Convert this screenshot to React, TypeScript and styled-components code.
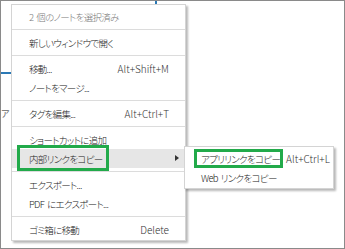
import styled, { createGlobalStyle } from "styled-components";

const Global = createGlobalStyle`
  html, body {
    margin: 0;
    padding: 0;
    background: #fff;
  }
  body {
    font-family: "Noto Sans CJK JP", "Noto Sans", sans-serif;
    font-feature-settings: "palt";
  }
`;

const Frame = styled.div`
  position: relative;
  width: 345px;
  height: 249px;
  box-sizing: border-box;
  border: 1px solid #8a8a8a;
  background: #fff;
  overflow: hidden;
`;

const BlueLine = styled.div<{ $vertical?: boolean }>`
  position: absolute;
  background: #2b79b5;
  ${(p) =>
    p.$vertical
      ? "left: 154px; top: 0; width: 2px; height: 8px;"
      : "left: 0; top: 71px; width: 10px; height: 2px;"}
`;

const StrayText = styled.span`
  position: absolute;
  left: 0;
  top: 106px;
  font-size: 9px;
  color: #666;
`;

const Menu = styled.div`
  position: absolute;
  left: 10px;
  top: 3px;
  width: 175px;
  box-sizing: border-box;
  padding: 2px 0 1px;
  background: #fff;
  border: 1px solid #d4d4d4;
  box-shadow: 2px 2px 2px rgba(0, 0, 0, 0.28);
  font-size: 9.5px;
  font-weight: 300;
  color: #222;
`;

const Item = styled.div<{ $muted?: boolean; $active?: boolean }>`
  position: relative;
  display: flex;
  align-items: center;
  height: 19px;
  padding: 0 16px 0 17px;
  white-space: nowrap;
  color: ${(p) => (p.$muted ? "#7a7a7a" : "inherit")};
  background: ${(p) => (p.$active ? "#e6e6e6" : "transparent")};
`;

const Label = styled.span<{ $grow?: boolean }>`
  flex: ${(p) => (p.$grow === false ? "none" : "1")};
  letter-spacing: -0.7px;
  word-spacing: 1.5px;
`;

const Shortcut = styled.span`
  color: #333;
  font-size: 10px;
`;

const Arrow = styled.span`
  position: absolute;
  right: 6px;
  top: 6px;
  width: 0;
  height: 0;
  border-top: 3.5px solid transparent;
  border-bottom: 3.5px solid transparent;
  border-left: 4px solid #333;
`;

const Separator = styled.div`
  height: 1px;
  margin: 3px 0;
  background: #dcdcdc;
`;

const Highlight = styled.div<{ $left: number; $top: number; $w: number; $h: number }>`
  position: absolute;
  left: ${(p) => p.$left}px;
  top: ${(p) => p.$top}px;
  width: ${(p) => p.$w}px;
  height: ${(p) => p.$h}px;
  box-sizing: border-box;
  border: 3px solid #22aa4a;
  pointer-events: none;
`;

const SubMenu = styled.div`
  position: absolute;
  left: 172px;
  top: -3px;
  width: 150px;
  box-sizing: border-box;
  padding: 2px 0 1px;
  background: #fff;
  border: 1px solid #d4d4d4;
  box-shadow: 2px 2px 2px rgba(0, 0, 0, 0.28);
  z-index: 2;
`;

const SubItem = styled.div`
  display: flex;
  align-items: center;
  gap: 6px;
  height: 19px;
  padding: 0 10px 0 16px;
  white-space: nowrap;
`;

export default function App() {
  return (
    <>
      <Global />
      <Frame>
        <BlueLine />
        <BlueLine $vertical />
        <StrayText>ア</StrayText>
        <Menu>
          <Item $muted>
            <Label>2 個のノートを選択済み</Label>
          </Item>
          <Separator />
          <Item>
            <Label>新しいウィンドウで開く</Label>
          </Item>
          <Separator />
          <Item>
            <Label>移動...</Label>
            <Shortcut>Alt+Shift+M</Shortcut>
          </Item>
          <Item>
            <Label>ノートをマージ...</Label>
          </Item>
          <Separator />
          <Item>
            <Label>タグを編集...</Label>
            <Shortcut>Alt+Ctrl+T</Shortcut>
          </Item>
          <Separator />
          <Item>
            <Label>ショートカットに追加</Label>
          </Item>
          <Item $active>
            <Label>内部リンクをコピー</Label>
            <Arrow />
            <Highlight $left={5} $top={-4} $w={92} $h={26} />
            <SubMenu>
              <SubItem>
                <Label $grow={false}>アプリリンクをコピー</Label>
                <Shortcut>Alt+Ctrl+L</Shortcut>
              </SubItem>
              <SubItem>
                <Label>Web リンクをコピー</Label>
              </SubItem>
              <Highlight $left={9} $top={2} $w={89} $h={19} />
            </SubMenu>
          </Item>
          <Separator />
          <Item>
            <Label>エクスポート...</Label>
          </Item>
          <Item>
            <Label>PDF にエクスポート...</Label>
          </Item>
          <Separator />
          <Item>
            <Label>ゴミ箱に移動</Label>
            <Shortcut>Delete</Shortcut>
          </Item>
        </Menu>
      </Frame>
    </>
  );
}
